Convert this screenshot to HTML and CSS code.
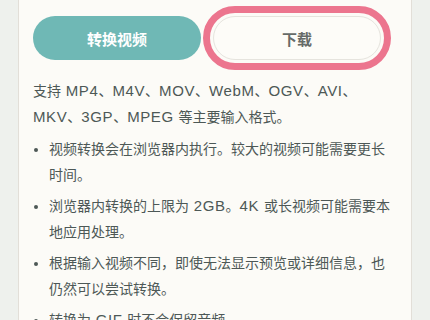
FILE: index.html
```html
<!DOCTYPE html>
<html lang="zh-CN">

<head>
    <meta charset="UTF-8">
    <title>视频转换</title>
    <link rel="stylesheet" href="styles.css">
</head>

<body>
    <div class="card">
        <div class="actions">
            <button class="btn btn-primary">转换视频</button>
            <button class="btn btn-secondary focused">下载</button>
        </div>

        <p class="formats">支持<span class="en"> MP4</span>、<span class="en">M4V</span>、<span class="en">MOV</span>、<span class="en">WebM</span>、<span class="en">OGV</span>、<span class="en">AVI</span>、<span class="en">MKV</span>、<span class="en">3GP</span>、<span class="en">MPEG </span>等主要输入格式。</p>

        <ul class="notes">
            <li>视频转换会在浏览器内执行。较大的视频可能需要更长时间。</li>
            <li>浏览器内转换的上限为<span class="en"> 2GB</span>。<span class="en">4K </span>或长视频可能需要本地应用处理。</li>
            <li>根据输入视频不同，即使无法显示预览或详细信息，也仍然可以尝试转换。</li>
            <li>转换为<span class="en"> GIF </span>时不会保留音频。</li>
        </ul>
    </div>
</body>

</html>
```

FILE: styles.css
```css
body {
    font-family: 'Liberation Sans', 'Noto Sans CJK SC', sans-serif;
    background-color: #eef1ed;
    margin: 0;
    padding: 0;
    color: #4d5856;
}

.card {
    margin: 0 18px;
    background: #fcfbf7;
    border-left: 1px solid #e2dfd8;
    border-right: 1px solid #e2dfd8;
    padding: 16px 14px 20px;
    min-height: 400px;
}

.actions {
    display: flex;
    gap: 12px;
}

.btn {
    width: 168px;
    height: 44px;
    border-radius: 22px;
    font-family: inherit;
    font-size: 15px;
    font-weight: bold;
    cursor: pointer;
}

.btn-primary {
    background-color: #6fb8b5;
    color: white;
    border: none;
}

.btn-secondary {
    background-color: #fdfcf8;
    color: #666b68;
    border: 1px solid #e6e4de;
}

.btn.focused {
    outline: 7px solid #ec758e;
    outline-offset: 3px;
}

.formats {
    font-size: 14px;
    line-height: 26px;
    margin: 18px 0 6px;
}

/* latin runs are set a bit wider than the CJK text */
.en {
    font-size: 15px;
    letter-spacing: 0.6px;
}

.notes {
    margin: 0;
    padding-left: 16px;
    font-size: 14px;
    line-height: 26px;
}

.notes li {
    margin-bottom: 5px;
}
```
